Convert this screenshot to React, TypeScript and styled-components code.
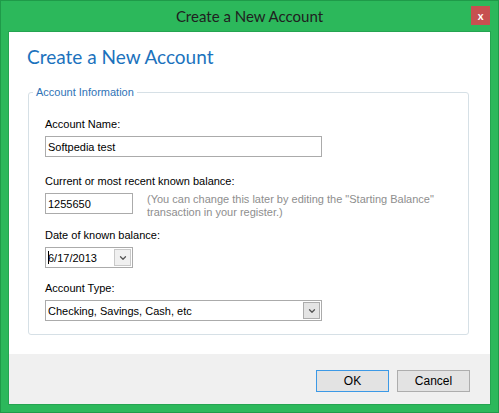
import * as React from 'react';
import styled, { createGlobalStyle } from 'styled-components';
import { ChevronDown } from 'lucide-react';

const GlobalStyle = createGlobalStyle`
    html, body {
        margin: 0;
        padding: 0;
        background: #2bb75a;
    }
    * {
        box-sizing: border-box;
    }
`;

const Window = styled.div`
    width: 499px;
    height: 413px;
    background: #2cb85b;
    border: 1px solid #1f9a49;
    display: flex;
    flex-direction: column;
    font-family: "Liberation Sans", Arial, sans-serif;
`;

const TitleBar = styled.div`
    height: 30px;
    display: flex;
    align-items: center;
    justify-content: center;
    position: relative;
    font-family: Lato, "Noto Sans", sans-serif;
    font-size: 15px;
    color: #202020;
`;

const CloseButton = styled.div`
    position: absolute;
    right: 8px;
    top: 5px;
    width: 19px;
    height: 19px;
    background: #c75050;
    color: #fff;
    font-size: 11px;
    font-weight: bold;
    display: flex;
    align-items: center;
    justify-content: center;
    line-height: 1;
`;

const Client = styled.div`
    flex: 1;
    margin: 0 7px 7px 7px;
    border: 1px solid #25a451;
    display: flex;
    flex-direction: column;
    background: #fff;
`;

const Content = styled.div`
    flex: 1;
    padding: 10px 21px 0 18px;
`;

const Heading = styled.h1`
    margin: 0;
    font-family: Lato, "Noto Sans", sans-serif;
    font-weight: normal;
    font-size: 19px;
    color: #1b72bd;
    line-height: 30px;
`;

const Group = styled.fieldset`
    margin: 14px 0 0 1px;
    padding: 20px 16px 13px 16px;
    border: 1px solid #d6e0e6;
    border-radius: 3px;
    min-width: 0;
    display: flex;
    flex-direction: column;
    gap: 14px;
`;

const Legend = styled.legend`
    margin-left: -12px;
    padding: 0 3px;
    font-size: 11px;
    color: #2f73b6;
`;

const Field = styled.div<{ $extra?: number }>`
    display: flex;
    flex-direction: column;
    gap: 5px;
    margin-top: ${p => p.$extra || 0}px;
`;

const Label = styled.label`
    font-size: 11px;
    color: #000;
    line-height: 13px;
`;

const Row = styled.div`
    display: flex;
    align-items: flex-start;
    gap: 14px;
    height: 21px;
`;

const TextBox = styled.div<{ $width: number }>`
    width: ${p => p.$width}px;
    height: 21px;
    border: 1px solid #ababab;
    background: #fff;
    font-size: 11px;
    color: #000;
    display: flex;
    align-items: center;
    padding-left: 2px;
    position: relative;
    flex-shrink: 0;
`;

const Hint = styled.div`
    font-size: 11px;
    color: #8e8e8e;
    line-height: 13px;
    white-space: nowrap;
`;

const Caret = styled.span`
    display: inline-block;
    width: 1px;
    height: 13px;
    background: #000;
    margin-right: -1px;
`;

const DropButton = styled.div<{ $framed?: boolean }>`
    position: absolute;
    right: 1px;
    top: 1px;
    bottom: 1px;
    width: 17px;
    border: 1px solid ${p => (p.$framed ? '#acacac' : '#c9c9c9')};
    background: ${p => (p.$framed ? '#e4e4e4' : '#f0f0f0')};
    display: flex;
    align-items: center;
    justify-content: center;
    color: #555;
`;

const Footer = styled.div`
    height: 50px;
    background: #f0f0f0;
    display: flex;
    justify-content: flex-end;
    align-items: flex-start;
    gap: 8px;
    padding: 16px 20px 0 0;
`;

const Button = styled.button<{ $focused?: boolean }>`
    width: 73px;
    height: 22px;
    border: 1px solid ${p => (p.$focused ? '#3c99e6' : '#adadad')};
    background: #e3e3e3;
    font-family: "Liberation Sans", Arial, sans-serif;
    font-size: 12px;
    color: #000;
    padding: 0;
`;

export default function App() {
    return (
        <>
            <GlobalStyle />
            <Window>
                <TitleBar>
                    Create a New Account
                    <CloseButton>x</CloseButton>
                </TitleBar>
                <Client>
                    <Content>
                        <Heading>Create a New Account</Heading>
                        <Group>
                            <Legend>Account Information</Legend>
                            <Field>
                                <Label>Account Name:</Label>
                                <TextBox $width={277}>Softpedia test</TextBox>
                            </Field>
                            <Field $extra={4}>
                                <Label>Current or most recent known balance:</Label>
                                <Row>
                                    <TextBox $width={88}>1255650</TextBox>
                                    <Hint>
                                        (You can change this later by editing the "Starting Balance"
                                        <br />
                                        transaction in your register.)
                                    </Hint>
                                </Row>
                            </Field>
                            <Field $extra={1}>
                                <Label>Date of known balance:</Label>
                                <TextBox $width={88}>
                                    <Caret />6/17/2013
                                    <DropButton>
                                        <ChevronDown size={10} strokeWidth={3} />
                                    </DropButton>
                                </TextBox>
                            </Field>
                            <Field>
                                <Label>Account Type:</Label>
                                <TextBox $width={277}>
                                    Checking, Savings, Cash, etc
                                    <DropButton $framed>
                                        <ChevronDown size={10} strokeWidth={3} />
                                    </DropButton>
                                </TextBox>
                            </Field>
                        </Group>
                    </Content>
                    <Footer>
                        <Button $focused>OK</Button>
                        <Button>Cancel</Button>
                    </Footer>
                </Client>
            </Window>
        </>
    );
}
